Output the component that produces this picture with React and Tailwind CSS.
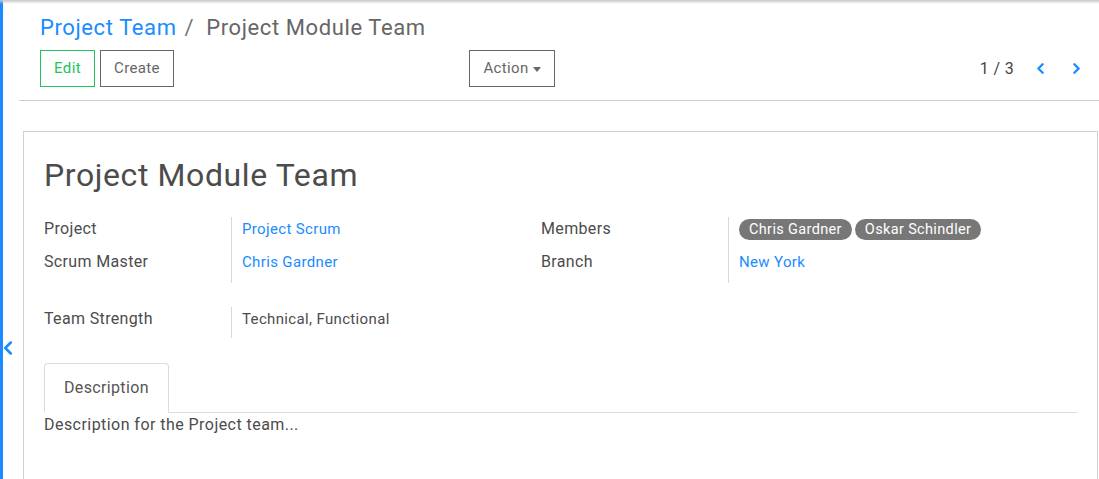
import { ChevronLeft, ChevronRight } from 'lucide-react'

function Field({ label, children }) {
  return (
    <div className="flex h-[33px]">
      <div className="w-[187px] text-[16px] leading-6 text-[#4c4c4c]">{label}</div>
      <div className="flex-1 border-l border-[#d9d9d9] pl-[10px] text-[15px] leading-6">{children}</div>
    </div>
  )
}

function Tag({ children }) {
  return (
    <span className="inline-flex h-[21px] items-center rounded-full bg-[#777] px-[10px] text-[14.5px] tracking-[0.35px] text-white">
      {children}
    </span>
  )
}

export default function App() {
  return (
    <div className="relative flex h-[479px] w-[1099px] overflow-hidden bg-white font-['Roboto',sans-serif] tracking-[0.35px] text-[#4c4c4c]">
      <div className="pointer-events-none absolute left-0 right-0 top-0 h-[4px] bg-gradient-to-b from-[#c8c8c8] to-transparent" />
      <div className="w-[3px] shrink-0 bg-[#1a8cff]" />
      <ChevronLeft className="absolute left-[-3px] top-[337px] text-[#1a8cff]" size={22} strokeWidth={2.8} />

      <div className="flex-1 pl-[16px]">
        {/* control panel */}
        <div className="border-b border-[#cfcfcf] pb-[13px] pl-[21px] pr-[14px] pt-[12px]">
          <div className="flex h-[30px] items-center text-[22px] tracking-[0.6px]">
            <span className="text-[#1a8cff]">Project Team</span>
            <span className="ml-[8px] mr-[12px] text-[#777]">/</span>
            <span className="text-[#666]">Project Module Team</span>
          </div>
          <div className="mt-[8px] flex h-[37px] items-center">
            <div className="flex w-[429px] gap-[5px]">
              <button className="h-[37px] w-[55px] border border-[#21c45a] text-[15px] text-[#21c45a]">Edit</button>
              <button className="h-[37px] w-[74px] border border-[#666] text-[15px] text-[#666]">Create</button>
            </div>
            <button className="flex h-[37px] w-[86px] items-center justify-center gap-[4px] border border-[#666] text-[15px] text-[#666]">
              Action
              <span className="mt-[2px] h-0 w-0 border-x-[4px] border-t-[5px] border-x-transparent border-t-[#666]" />
            </button>
            <div className="ml-auto flex items-center">
              <span className="text-[16px] text-[#444]">1 / 3</span>
              <ChevronLeft className="ml-[18px] text-[#1a8cff]" size={17} strokeWidth={3.4} />
              <ChevronRight className="ml-[19px] text-[#1a8cff]" size={17} strokeWidth={3.4} />
            </div>
          </div>
        </div>

        {/* sheet */}
        <div className="ml-[4px] mr-[1px] mt-[30px] h-[400px] border border-[#d0d0d0] px-[20px] pr-[20px] pt-[23px]">
          <h1 className="text-[32px] leading-[40px] tracking-[0.6px] text-[#4c4c4c]">Project Module Team</h1>

          <div className="mt-[22px] flex">
            <div className="w-[497px]">
              <Field label="Project">
                <span className="text-[#1a8cff]">Project Scrum</span>
              </Field>
              <Field label="Scrum Master">
                <span className="text-[#1a8cff]">Chris Gardner</span>
              </Field>
            </div>
            <div className="flex-1">
              <Field label="Members">
                <div className="flex gap-[3px] pt-[2px]">
                  <Tag>Chris Gardner</Tag>
                  <Tag>Oskar Schindler</Tag>
                </div>
              </Field>
              <Field label="Branch">
                <span className="text-[#1a8cff]">New York</span>
              </Field>
            </div>
          </div>

          <div className="mt-[24px] w-[497px]">
            <div className="flex h-[31px]">
              <div className="w-[187px] text-[16px] leading-6">Team Strength</div>
              <div className="flex-1 border-l border-[#d9d9d9] pl-[10px] text-[15px] leading-6">Technical, Functional</div>
            </div>
          </div>

          <div className="mt-[25px] flex border-b border-[#dcdcdc]">
            <div className="-mb-px flex h-[50px] items-center rounded-t-[4px] border border-b-white border-[#dcdcdc] bg-white px-[19px] text-[16px] text-[#555]">
              Description
            </div>
          </div>
          <p className="text-[16px] leading-6 tracking-[0.45px] text-[#4c4c4c]">Description for the Project team...</p>
        </div>
      </div>
    </div>
  )
}
